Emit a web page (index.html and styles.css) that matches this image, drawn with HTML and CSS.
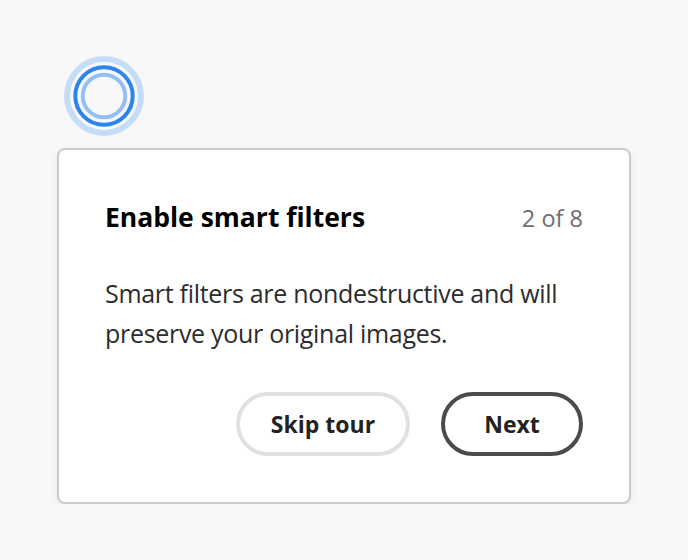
FILE: index.html
```html
<!DOCTYPE html>
<html lang="en">
<head>
<meta charset="utf-8">
<title>Coach mark</title>
<link rel="stylesheet" href="styles.css">
</head>
<body>
<div class="stage">
  <div class="beacon" aria-hidden="true">
    <svg width="80" height="80" viewBox="0 0 80 80">
      <circle cx="40" cy="40" r="37" fill="none" stroke="#c6ddf8" stroke-width="6"/>
      <circle cx="40" cy="40" r="28.7" fill="none" stroke="#2c84ec" stroke-width="4"/>
      <circle cx="40" cy="40" r="21.3" fill="none" stroke="#93bff2" stroke-width="4"/>
    </svg>
  </div>
  <div class="card">
    <div class="card-head">
      <h2 class="title">Enable smart filters</h2>
      <span class="step">2 of 8</span>
    </div>
    <p class="body">Smart filters are nondestructive and will preserve your original images.</p>
    <div class="actions">
      <button class="btn btn-secondary">Skip tour</button>
      <button class="btn btn-primary">Next</button>
    </div>
  </div>
</div>
</body>
</html>
```
FILE: styles.css
```css
html, body {
  margin: 0;
  padding: 0;
  background: #f8f8f8;
  font-family: "Open Sans", "Noto Sans", sans-serif;
}
.stage {
  padding: 56px 0 0 57px;
}
.beacon {
  width: 80px;
  height: 80px;
  margin-left: 7px;
}
.beacon svg { display: block; }
.card {
  margin-top: 12px;
  width: 574px;
  box-sizing: border-box;
  background: #fff;
  border: 2px solid #cacaca;
  border-radius: 8px;
  box-shadow: 0 3px 8px rgba(0,0,0,0.08);
  padding: 51px 46px 46px 46px;
}
.card-head {
  display: flex;
  justify-content: space-between;
  align-items: baseline;
}
.title {
  margin: 0;
  font-size: 26.5px;
  font-weight: 700;
  color: #000;
  line-height: 32px;
}
.step {
  font-size: 23.5px;
  color: #6e6e6e;
}
.body {
  margin: 39px 0 0 0;
  font-size: 25px;
  letter-spacing: -0.3px;
  line-height: 40px;
  color: #2c2c2c;
}
.actions {
  margin-top: 39px;
  display: flex;
  justify-content: flex-end;
  gap: 31px;
}
.btn {
  height: 64px;
  border-radius: 32px;
  border: 4px solid;
  background: #fff;
  font-family: inherit;
  font-size: 23px;
  font-weight: 700;
  color: #222;
  padding: 0;
}
.btn-secondary {
  border-color: #e1e1e1;
  width: 174px;
}
.btn-primary {
  border-color: #4b4b4b;
  width: 142px;
}
```
